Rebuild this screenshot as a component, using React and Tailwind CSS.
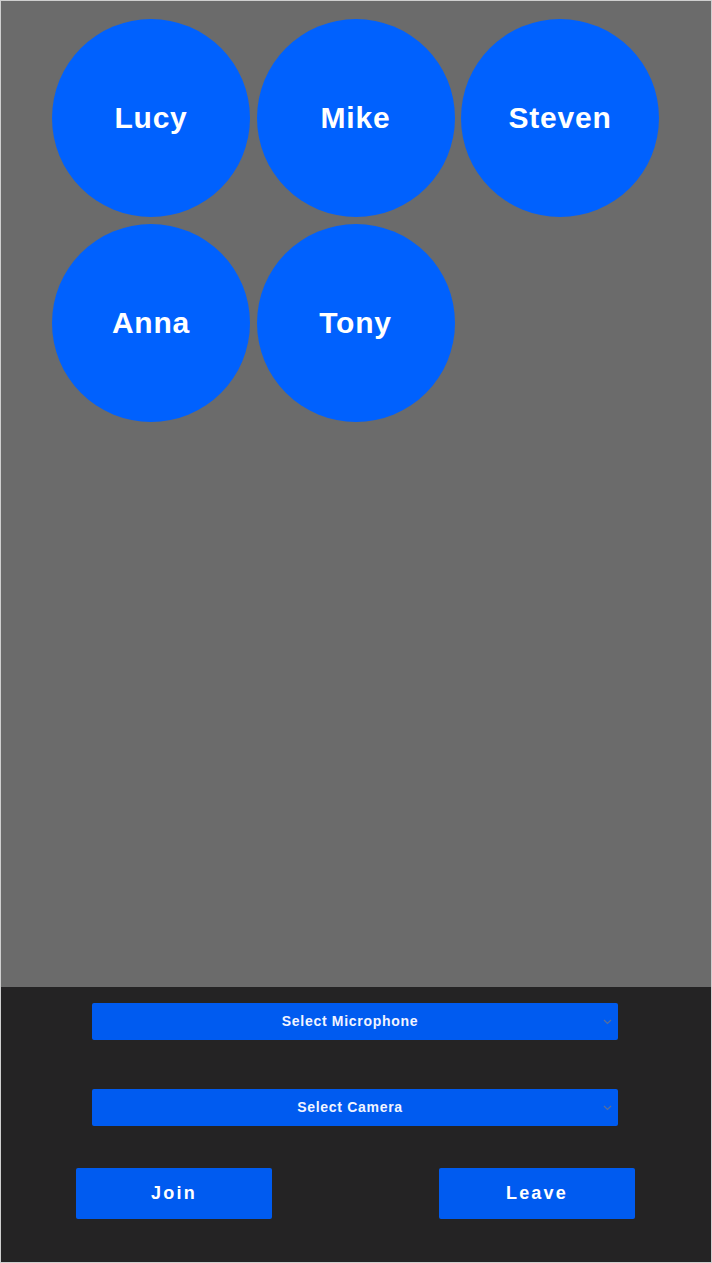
import React from "react";

const people = ["Lucy", "Mike", "Steven", "Anna", "Tony"];

const Chevron = () => (
  <svg width="9" height="6" viewBox="0 0 9 6" fill="none" className="absolute right-[6px] top-1/2 -translate-y-1/2">
    <path d="M1 1l3.5 3.5L8 1" stroke="#5a6f98" strokeWidth="1.2" />
  </svg>
);

const DeviceSelect = ({ label }) => (
  <div className="relative w-[526px] h-[37px] ml-[91px] bg-[#005bf0] rounded-[2px] flex items-center justify-center pr-[10px] text-[14px] font-bold tracking-[0.7px] text-[#f2f4ff]">
    {label}
    <Chevron />
  </div>
);

const App = () => {
  return (
    <div
      className="h-[1263px] flex flex-col border border-[#cfcfcf] bg-[#242324]"
      style={{ fontFamily: '"Liberation Sans", Arial, sans-serif' }}
    >
      {/* Participants */}
      <div className="flex-1 bg-[#6b6b6b] pt-[18px]">
        <div className="w-[607px] ml-[51px] grid grid-cols-3 gap-[6.5px]">
          {people.map((name) => (
            <div
              key={name}
              className="w-[198px] h-[198px] rounded-full bg-[#0061fe] flex items-center justify-center pb-[1px] text-white text-[30px] font-bold tracking-[0.8px]"
            >
              {name}
            </div>
          ))}
        </div>
      </div>

      {/* Controls */}
      <div className="h-[275px] shrink-0 bg-[#242324] pt-[16px]">
        <DeviceSelect label="Select Microphone" />
        <div className="mt-[49px]">
          <DeviceSelect label="Select Camera" />
        </div>
        <div className="w-[559px] ml-[75px] mt-[42px] flex justify-between">
          <button className="w-[196px] h-[51px] bg-[#005bf0] rounded-[2px] text-white text-[18px] font-bold tracking-[2.2px]">
            Join
          </button>
          <button className="w-[196px] h-[51px] bg-[#005bf0] rounded-[2px] text-white text-[18px] font-bold tracking-[2.2px]">
            Leave
          </button>
        </div>
      </div>
    </div>
  );
};

export default App;
